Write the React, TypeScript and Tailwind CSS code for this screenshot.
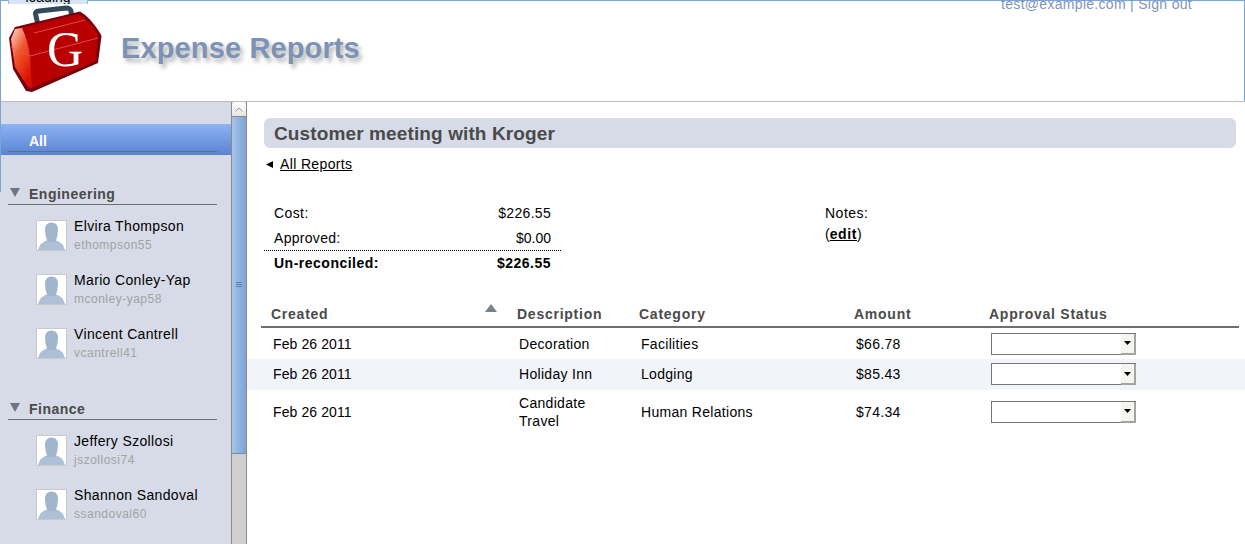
const sans = "font-['Liberation_Sans',Arial,sans-serif]";

const groups = [
  {
    name: "Engineering",
    people: [
      { name: "Elvira Thompson", user: "ethompson55" },
      { name: "Mario Conley-Yap", user: "mconley-yap58" },
      { name: "Vincent Cantrell", user: "vcantrell41" },
    ],
  },
  {
    name: "Finance",
    people: [
      { name: "Jeffery Szollosi", user: "jszollosi74" },
      { name: "Shannon Sandoval", user: "ssandoval60" },
    ],
  },
];

const rows = [
  { created: "Feb 26 2011", description: "Decoration", category: "Facilities", amount: "$66.78" },
  { created: "Feb 26 2011", description: "Holiday Inn", category: "Lodging", amount: "$85.43" },
  { created: "Feb 26 2011", description: "Candidate Travel", category: "Human Relations", amount: "$74.34" },
];

function Logo() {
  return (
    <svg width="102" height="100" viewBox="0 0 102 100" className="shrink-0">
      <defs>
        <linearGradient id="side" x1="0" y1="0" x2="0.6" y2="1">
          <stop offset="0" stopColor="#ffd9d0" />
          <stop offset="0.45" stopColor="#f05a30" />
          <stop offset="1" stopColor="#d81000" />
        </linearGradient>
      </defs>
      <path d="M38 24 L35.5 13 Q35 10.5 39 10 L66 7 Q70 7 71 10 L72 18" fill="none" stroke="#334a5c" strokeWidth="5" />
      <path d="M15 26 L80 10.5 Q90 16 100 32 L101.5 35 L98 62 L32 91 L26 90 L13 68 L9 37 Z" fill="#75000f" />
      <path d="M16 28 L79 13 Q90 20 98 33 L96 60 L32 87 L28 86 L15 66 L11 38 Z" fill="#b90000" />
      <path d="M15 28 L22 27 Q28 40 30 55 L32 87 L28 86 L15 66 L11 38 Z" fill="url(#side)" />
      <path d="M34 32 L85 19" stroke="#e8596b" strokeWidth="0.8" fill="none" />
      <path d="M11 46 L30 55 L98 37" stroke="#e8596b" strokeWidth="0.8" fill="none" />
      <text x="65" y="65" textAnchor="middle" fontSize="50" fill="#ffffff" fontFamily="'Liberation Serif', serif">
        G
      </text>
    </svg>
  );
}

function Avatar() {
  return (
    <div className="w-[31px] h-[31px] shrink-0 bg-white border border-[#c9c9c9]">
      <svg width="29" height="29" viewBox="0 0 29 29">
        <path d="M1 29 Q3 21 11 19 L18 19 Q26 21 28 29 Z" fill="#adc0d6" />
        <path d="M8 9 Q8 1.5 14.5 1.5 Q21 1.5 21 9 Q21 15 18.5 21 L10.5 21 Q8 15 8 9 Z" fill="#a1b5cd" />
      </svg>
    </div>
  );
}

function Scrollbar() {
  return (
    <div className="w-[16px] shrink-0 flex flex-col bg-[#d0cfcc] border-x border-[#8b8b8b]">
      <div className="h-[15px] shrink-0 bg-gradient-to-b from-white to-[#e6e6e2] rounded-t-[3px] border-b border-[#8b8b8b] flex items-center justify-center">
        <svg width="8" height="5" viewBox="0 0 8 5">
          <path d="M0.5 4.5 L4 1 L7.5 4.5" fill="none" stroke="#9a9a9a" strokeWidth="1" />
        </svg>
      </div>
      <div className="h-[337px] shrink-0 bg-gradient-to-r from-[#a9c5e6] via-[#8fb4e0] to-[#7da3d8] border-b border-[#6d8fc0] flex flex-col items-center justify-center gap-px pb-[2px]">
        <div className="w-[6px] h-px bg-[#5f7fb0]" />
        <div className="w-[6px] h-px bg-[#5f7fb0]" />
        <div className="w-[6px] h-px bg-[#5f7fb0]" />
      </div>
    </div>
  );
}

function Sidebar() {
  return (
    <div className="w-[231px] shrink-0 bg-[#d6dbe7] pt-[22px] overflow-hidden">
      <div className="h-[31px] bg-gradient-to-b from-[#8db3f2] to-[#5b83d3] pl-[8px] pr-[14px]">
        <div className="h-[28px] border-b border-[#5c6f95] pl-[21px] pt-[7px] text-[14px] leading-[20px] font-bold text-white">
          All
        </div>
      </div>
      {groups.map((group, i) => (
        <div key={group.name} className={i === 0 ? "mt-[28px] mb-[34px]" : ""}>
          <div className="ml-[8px] mr-[14px] h-[22px] flex items-start border-b border-[#6e6e6e]">
            <svg width="21" height="20" viewBox="0 0 21 20" className="shrink-0">
              <path d="M2 5 L12 5 L7 14 Z" fill="#6e7681" />
            </svg>
            <span className="pt-px text-[14px] leading-[20px] font-bold text-[#4b4a4a] tracking-[0.5px]">{group.name}</span>
          </div>
          <div className="flex flex-col pt-[11px] gap-[14px]">
            {group.people.map((person) => (
              <div key={person.user} className="flex pl-[36px] gap-[7px] h-[40px]">
                <div className="pt-[4px]">
                  <Avatar />
                </div>
                <div>
                  <div className="text-[14px] leading-[20px] text-black tracking-[0.35px]">{person.name}</div>
                  <div className="pt-px text-[12px] leading-[17px] text-[#a3a3a3] tracking-[0.5px]">{person.user}</div>
                </div>
              </div>
            ))}
          </div>
        </div>
      ))}
    </div>
  );
}

function Approval() {
  return (
    <div className="relative w-[145px] h-[22px]">
      <select className="w-full h-full appearance-none bg-white border border-[#767676]" />
      <div className="absolute right-0 top-px w-[15px] h-[21px] bg-[#f4f4f0] border-r-2 border-b-2 border-[#a3a3a0] flex items-center justify-center pointer-events-none">
        <svg width="7" height="4" viewBox="0 0 7 4">
          <path d="M0 0 L7 0 L3.5 4 Z" fill="#000" />
        </svg>
      </div>
    </div>
  );
}

function Summary() {
  return (
    <div className="flex mt-[27px] ml-[17px]">
      <div className="w-[297px] text-[14px] text-black">
        <div className="flex justify-between px-[10px] h-[25px] items-center">
          <span className="tracking-[0.4px]">Cost:</span>
          <span className="tracking-[0.3px]">$226.55</span>
        </div>
        <div className="flex justify-between px-[10px] h-[25px] items-center border-b border-dotted border-black">
          <span className="tracking-[0.3px]">Approved:</span>
          <span>$0.00</span>
        </div>
        <div className="flex justify-between px-[10px] h-[25px] items-center font-bold tracking-[0.5px]">
          <span>Un-reconciled:</span>
          <span>$226.55</span>
        </div>
      </div>
      <div className="ml-[264px] pt-[2px] text-[14px] leading-[20px] text-black">
        <div className="tracking-[0.5px]">Notes:</div>
        <div className="mt-px">
          (<span className="font-bold underline tracking-[0.6px]">edit</span>)
        </div>
      </div>
    </div>
  );
}

function Table() {
  const cols = "grid grid-cols-[246px_122px_215px_135px_1fr] items-center";
  return (
    <div className="mt-[24px]">
      <div className={`${cols} ml-[14px] mr-[6px] pl-[10px] pt-[2px] h-[28px] border-b-2 border-[#6e6e6e] text-[14px] font-bold text-[#4b4a4a] tracking-[0.75px]`}>
        <div className="flex justify-between items-start pr-[20px]">
          <span>Created</span>
          <svg width="12" height="9" viewBox="0 0 12 9" className="mt-0">
            <path d="M0 8 L6 0 L12 8 Z" fill="#77828f" />
          </svg>
        </div>
        <span>Description</span>
        <span>Category</span>
        <span>Amount</span>
        <span>Approval Status</span>
      </div>
      {rows.map((row, i) => (
        <div
          key={row.amount}
          className={`${cols} pl-[26px] text-[14px] leading-[18px] text-black tracking-[0.3px] ${i === 1 ? "bg-[#f1f4f9] pb-px" : ""} ${i === 2 ? "h-[43px]" : "h-[31px]"}`}
        >
          <span className="tracking-[0.1px]">{row.created}</span>
          <span className="pr-[30px]">{row.description}</span>
          <span>{row.category}</span>
          <span>{row.amount}</span>
          <Approval />
        </div>
      ))}
    </div>
  );
}

export default function App() {
  return (
    <div className={`relative h-[544px] overflow-hidden bg-white ${sans}`}>
      <div className="absolute left-[8px] top-[-11px] w-[80px] h-[15px] overflow-hidden bg-[#d6e4f7] border-x border-[#9db5d6] text-center text-[14px] leading-[16px] text-black">
        loading
      </div>
      <div className="absolute right-[53px] top-[-6px] text-[14px] leading-[20px] text-[#7f95b5] tracking-[0.3px] z-10">
        test@example.com | Sign out
      </div>
      <div className="absolute left-0 top-0 w-px h-[192px] bg-[#7aa5d8] z-10" />
      <div className="absolute right-0 top-0 w-px h-[101px] bg-[#7aa5d8] z-10" />

      <div className="h-[102px] border-t border-b border-t-[#7aa5d8] border-b-[#bdbdbd] flex items-start">
        <Logo />
        <h1 className="ml-[19px] mt-[29px] text-[29px] leading-[36px] font-bold text-[#7c93b5] tracking-[0.13px] [text-shadow:3px_4px_4px_#b5b5b5]">
          Expense Reports
        </h1>
      </div>

      <div className="flex h-[442px]">
        <Sidebar />
        <Scrollbar />
        <div className="flex-1 min-w-0">
          <div className="mt-[16px] ml-[17px] mr-[9px] h-[30px] bg-[#d6dbe7] rounded-[6px] pl-[10px] text-[19px] leading-[32px] font-bold text-[#4b4a4a] tracking-[0.12px]">
            Customer meeting with Kroger
          </div>
          <div className="flex items-center ml-[19px] mt-[6px] h-[20px] gap-[7px] text-[14px] text-black tracking-[0.36px]">
            <svg width="7" height="7" viewBox="0 0 7 7">
              <path d="M0 3.5 L7 0 L7 7 Z" fill="#000" />
            </svg>
            <span className="underline">All Reports</span>
          </div>
          <Summary />
          <Table />
        </div>
      </div>
    </div>
  );
}
